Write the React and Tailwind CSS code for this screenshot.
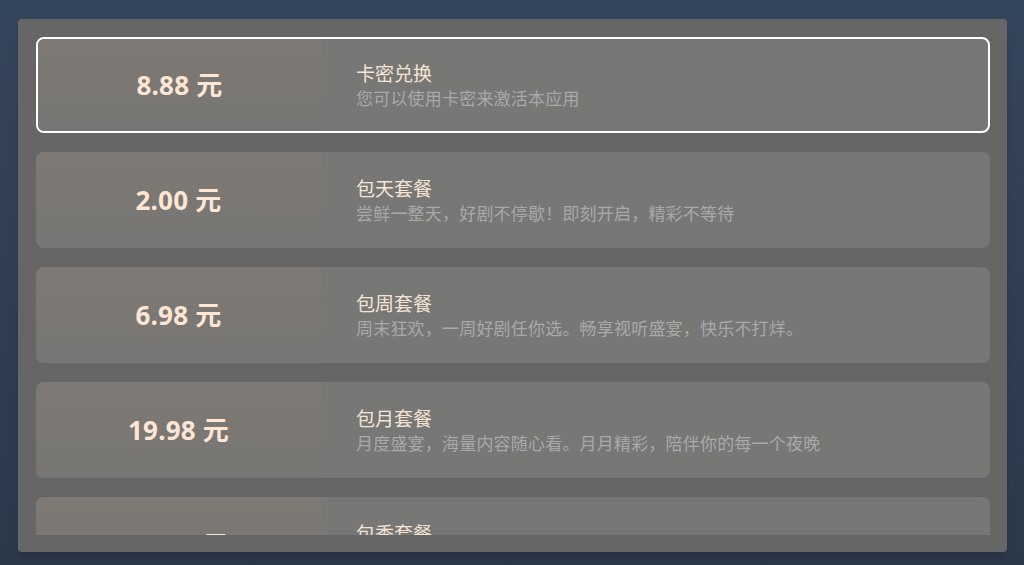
import React, { useState } from 'react';

const plans = [
  { id: 'card', price: '8.88', title: '卡密兑换', desc: '您可以使用卡密来激活本应用' },
  { id: 'day', price: '2.00', title: '包天套餐', desc: '尝鲜一整天，好剧不停歇！即刻开启，精彩不等待' },
  { id: 'week', price: '6.98', title: '包周套餐', desc: '周末狂欢，一周好剧任你选。畅享视听盛宴，快乐不打烊。' },
  { id: 'month', price: '19.98', title: '包月套餐', desc: '月度盛宴，海量内容随心看。月月精彩，陪伴你的每一个夜晚' },
  { id: 'season', price: '49.98', title: '包季套餐', desc: '一季好剧不间断，精彩内容看个够' },
];

const FONT = { fontFamily: '"Noto Sans", "Noto Sans CJK SC", sans-serif' };

const App = () => {
  const [selected, setSelected] = useState('card');

  return (
    <div
      className="w-[1024px] h-[565px] bg-gradient-to-b from-[#35455b] to-[#2c394b] pt-[19px] pl-[18px] pr-[17px] pb-[13px]"
      style={FONT}
    >
      {/* Panel */}
      <div className="h-full bg-[#666666] rounded-[4px] shadow-lg pt-[18px] pl-[18px] pr-[17px] pb-[17px]">
        <div className="h-full overflow-hidden flex flex-col gap-[19px]">
          {plans.map((plan) => {
            const active = plan.id === selected;
            return (
              <div
                key={plan.id}
                onClick={() => setSelected(plan.id)}
                className={`shrink-0 h-[96px] rounded-lg overflow-hidden flex cursor-pointer bg-[#777776] ${
                  active ? 'border-2 border-white' : ''
                }`}
              >
                <div
                  className={`${active ? 'w-[283px]' : 'w-[285px]'} shrink-0 flex items-center justify-center bg-gradient-to-b from-[#7e7974] to-[#777674]`}
                >
                  <span className="text-[26px] font-bold text-[#fde6d4] tracking-[0.2px]">
                    {plan.price} 元
                  </span>
                </div>
                <div className="flex-1 flex flex-col justify-center pl-[35px] pt-[2px]">
                  <div className="text-[19px] leading-[25px] text-[#f5e4d4]">{plan.title}</div>
                  <div className="text-[17px] leading-[24px] text-[#a9a9a9] tracking-[0.2px]">{plan.desc}</div>
                </div>
              </div>
            );
          })}
        </div>
      </div>
    </div>
  );
};

export default App;
